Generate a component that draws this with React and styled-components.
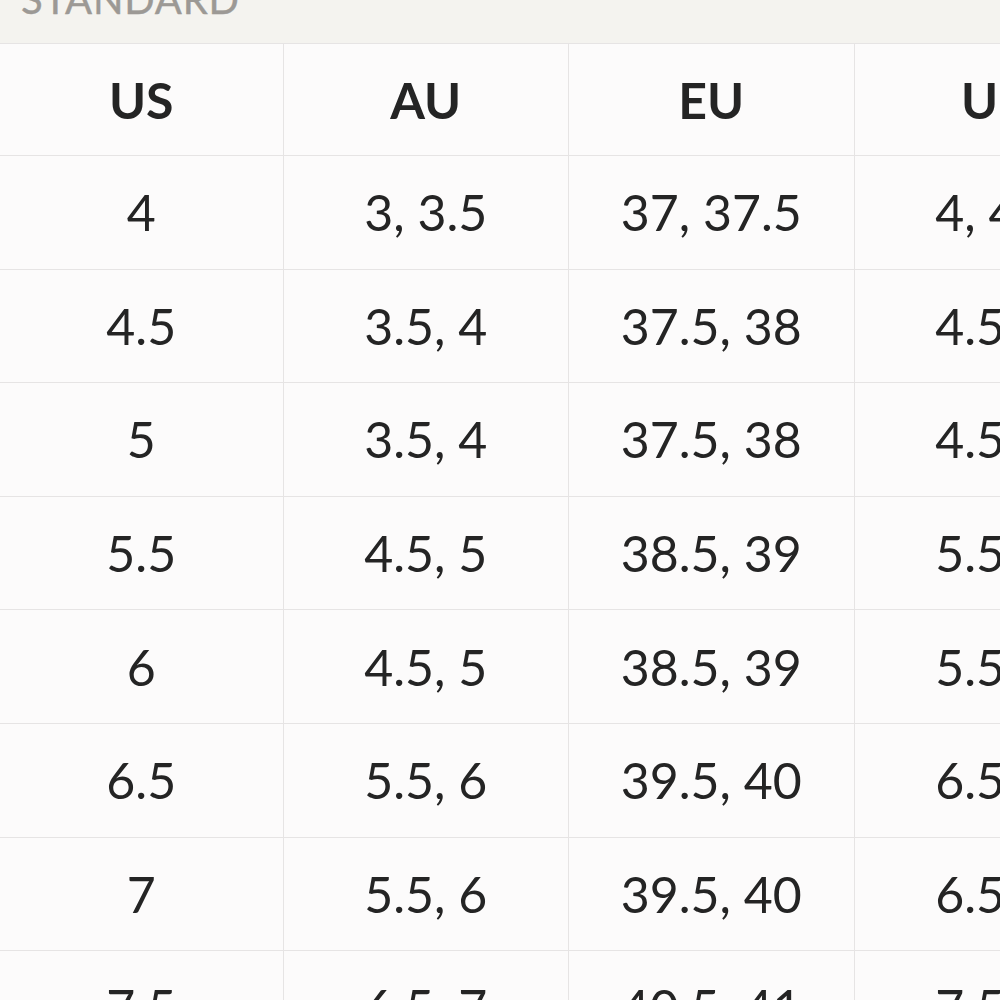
import React from 'react';
import styled, { createGlobalStyle } from 'styled-components';

const GlobalStyle = createGlobalStyle`
  html, body {
    margin: 0;
    padding: 0;
    background: #fcfbfb;
    overflow: hidden;
  }
  body {
    font-family: 'Lato', 'Open Sans', sans-serif;
    color: #242424;
  }
`;

const headers = ['US', 'AU', 'EU', 'UK', 'CM'];

const rows = [
  ['4', '3, 3.5', '37, 37.5', '4, 4.5', '23'],
  ['4.5', '3.5, 4', '37.5, 38', '4.5, 5', '23.5'],
  ['5', '3.5, 4', '37.5, 38', '4.5, 5', '23.5'],
  ['5.5', '4.5, 5', '38.5, 39', '5.5, 6', '24'],
  ['6', '4.5, 5', '38.5, 39', '5.5, 6', '24.5'],
  ['6.5', '5.5, 6', '39.5, 40', '6.5, 7', '25'],
  ['7', '5.5, 6', '39.5, 40', '6.5, 7', '25.5'],
  ['7.5', '6.5, 7', '40.5, 41', '7.5, 8', '26']
];

export default function App() {
  return (
    <>
      <GlobalStyle />
      <StPage>
        <StSectionBand>
          <StSectionTitle>STANDARD</StSectionTitle>
        </StSectionBand>
        <StTable>
          <colgroup>
            <StCol $first />
            <StCol />
            <StCol />
            <StCol />
            <StCol />
          </colgroup>
          <thead>
            <tr>
              {headers.map((h) => (
                <StHeadCell key={h}>{h}</StHeadCell>
              ))}
            </tr>
          </thead>
          <tbody>
            {rows.map((row, i) => (
              <tr key={i}>
                {row.map((v, j) => (
                  <StCell key={j}>{v}</StCell>
                ))}
              </tr>
            ))}
          </tbody>
        </StTable>
      </StPage>
    </>
  );
}

const StPage = styled.div`
  width: 1000px;
  height: 1000px;
  overflow: hidden;
`;

const StSectionBand = styled.div`
  background: #f4f3ef;
  height: 43px;
  overflow: hidden;
  padding-left: 21px;
`;

const StSectionTitle = styled.h2`
  margin: -21px 0 0 0;
  font-size: 40px;
  line-height: 40px;
  font-weight: 400;
  letter-spacing: 0.8px;
  color: #9c9995;
  -webkit-text-stroke: 0.4px #9c9995;
`;

const StTable = styled.table`
  border-collapse: collapse;
  table-layout: fixed;
  width: 1425px;
  background: #fcfbfb;
`;

const StCol = styled.col`
  width: ${(p) => (p.$first ? '283px' : '285.5px')};
`;

const StHeadCell = styled.th`
  height: 111px;
  padding: 0;
  border: 1px solid #e6e4e4;
  border-left: none;
  font-size: 50px;
  font-weight: 700;
  text-align: center;
  vertical-align: middle;
  color: #242424;
`;

const StCell = styled.td`
  height: 112.6px;
  padding: 0;
  border: 1px solid #e6e4e4;
  border-left: none;
  font-size: 50px;
  font-weight: 400;
  text-align: center;
  vertical-align: middle;
  color: #242424;
`;
